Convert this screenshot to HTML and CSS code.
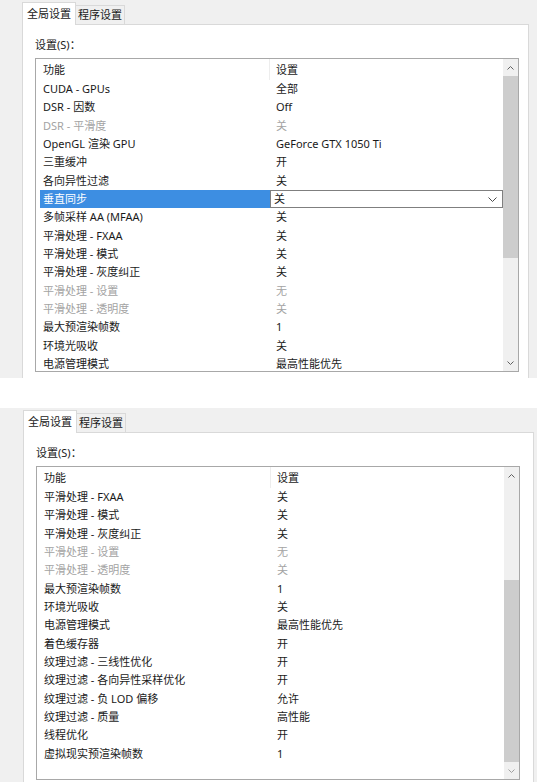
FILE: index.html
```html
<!DOCTYPE html>
<html lang="zh-CN">
  <head>
    <meta charset="UTF-8" />
    <meta name="viewport" content="width=device-width, initial-scale=1.0" />
    <title>管理 3D 设置</title>
    <link rel="stylesheet" href="styles.css">
  </head>
  <body>
    <div class="window">
      <div class="tabs">
        <div class="tab active">全局设置</div>
        <div class="tab">程序设置</div>
      </div>
      <div class="tab-page">
        <div class="field-label">设置(S)：</div>
        <div class="listview">
          <div class="list-body">
            <div class="row header"><span class="cell feature">功能</span><span class="cell value">设置</span></div>
            <div class="row"><span class="cell feature">CUDA - GPUs</span><span class="cell value">全部</span></div>
            <div class="row"><span class="cell feature">DSR - 因数</span><span class="cell value">Off</span></div>
            <div class="row disabled"><span class="cell feature">DSR - 平滑度</span><span class="cell value">关</span></div>
            <div class="row"><span class="cell feature">OpenGL 渲染 GPU</span><span class="cell value">GeForce GTX 1050 Ti</span></div>
            <div class="row"><span class="cell feature">三重缓冲</span><span class="cell value">开</span></div>
            <div class="row"><span class="cell feature">各向异性过滤</span><span class="cell value">关</span></div>
            <div class="row selected">
              <span class="cell feature">垂直同步</span>
              <span class="cell value combo">
                <span>关</span>
                <svg class="combo-arrow" width="9" height="5" viewBox="0 0 9 5"><polyline points="0.5,0.5 4.5,4.5 8.5,0.5" fill="none" stroke="#4a4a4a" stroke-width="1"/></svg>
              </span>
            </div>
            <div class="row"><span class="cell feature">多帧采样 AA (MFAA)</span><span class="cell value">关</span></div>
            <div class="row"><span class="cell feature">平滑处理 - FXAA</span><span class="cell value">关</span></div>
            <div class="row"><span class="cell feature">平滑处理 - 模式</span><span class="cell value">关</span></div>
            <div class="row"><span class="cell feature">平滑处理 - 灰度纠正</span><span class="cell value">关</span></div>
            <div class="row disabled"><span class="cell feature">平滑处理 - 设置</span><span class="cell value">无</span></div>
            <div class="row disabled"><span class="cell feature">平滑处理 - 透明度</span><span class="cell value">关</span></div>
            <div class="row"><span class="cell feature">最大预渲染帧数</span><span class="cell value">1</span></div>
            <div class="row"><span class="cell feature">环境光吸收</span><span class="cell value">关</span></div>
            <div class="row"><span class="cell feature">电源管理模式</span><span class="cell value">最高性能优先</span></div>
          </div>
          <div class="scrollbar">
            <div class="scroll-btn">
              <svg width="7" height="4" viewBox="0 0 7 4"><polyline points="0.5,3.5 3.5,0.5 6.5,3.5" fill="none" stroke="#606060" stroke-width="1"/></svg>
            </div>
            <div class="scroll-track"><div class="thumb"></div></div>
            <div class="scroll-btn">
              <svg width="7" height="4" viewBox="0 0 7 4"><polyline points="0.5,0.5 3.5,3.5 6.5,0.5" fill="none" stroke="#606060" stroke-width="1"/></svg>
            </div>
          </div>
        </div>
      </div>
    </div>

    <div class="window window-lower">
      <div class="tabs">
        <div class="tab active">全局设置</div>
        <div class="tab">程序设置</div>
      </div>
      <div class="tab-page">
        <div class="field-label">设置(S)：</div>
        <div class="listview">
          <div class="list-body">
            <div class="row header"><span class="cell feature">功能</span><span class="cell value">设置</span></div>
            <div class="row"><span class="cell feature">平滑处理 - FXAA</span><span class="cell value">关</span></div>
            <div class="row"><span class="cell feature">平滑处理 - 模式</span><span class="cell value">关</span></div>
            <div class="row"><span class="cell feature">平滑处理 - 灰度纠正</span><span class="cell value">关</span></div>
            <div class="row disabled"><span class="cell feature">平滑处理 - 设置</span><span class="cell value">无</span></div>
            <div class="row disabled"><span class="cell feature">平滑处理 - 透明度</span><span class="cell value">关</span></div>
            <div class="row"><span class="cell feature">最大预渲染帧数</span><span class="cell value">1</span></div>
            <div class="row"><span class="cell feature">环境光吸收</span><span class="cell value">关</span></div>
            <div class="row"><span class="cell feature">电源管理模式</span><span class="cell value">最高性能优先</span></div>
            <div class="row"><span class="cell feature">着色缓存器</span><span class="cell value">开</span></div>
            <div class="row"><span class="cell feature">纹理过滤 - 三线性优化</span><span class="cell value">开</span></div>
            <div class="row"><span class="cell feature">纹理过滤 - 各向异性采样优化</span><span class="cell value">开</span></div>
            <div class="row"><span class="cell feature">纹理过滤 - 负 LOD 偏移</span><span class="cell value">允许</span></div>
            <div class="row"><span class="cell feature">纹理过滤 - 质量</span><span class="cell value">高性能</span></div>
            <div class="row"><span class="cell feature">线程优化</span><span class="cell value">开</span></div>
            <div class="row"><span class="cell feature">虚拟现实预渲染帧数</span><span class="cell value">1</span></div>
          </div>
          <div class="scrollbar">
            <div class="scroll-btn">
              <svg width="7" height="4" viewBox="0 0 7 4"><polyline points="0.5,3.5 3.5,0.5 6.5,3.5" fill="none" stroke="#606060" stroke-width="1"/></svg>
            </div>
            <div class="scroll-track at-end"><div class="thumb"></div></div>
            <div class="scroll-btn">
              <svg width="7" height="4" viewBox="0 0 7 4"><polyline points="0.5,0.5 3.5,3.5 6.5,0.5" fill="none" stroke="#a0a0a0" stroke-width="1"/></svg>
            </div>
          </div>
        </div>
      </div>
    </div>
  </body>
</html>
```

FILE: styles.css
```css
* {
  box-sizing: border-box;
}

body {
  margin: 0;
  background: #fff;
  color: #1a1a1a;
  font-family: "Noto Sans", "Noto Sans CJK SC", sans-serif;
  font-size: 11px;
}

.window {
  height: 378px;
  background: #f0f0f0;
  padding: 0 8px 0 22px;
  display: flex;
  flex-direction: column;
  overflow: hidden;
}

.window-lower {
  height: 374px;
  margin-top: 30px;
  padding: 0 3px 0 23px;
}

/* tab strip */
.tabs {
  height: 24px;
  display: flex;
  align-items: flex-end;
}

.tab {
  height: 19px;
  line-height: 17px;
  padding: 0 2px;
  margin-left: -1px;
  border: 1px solid #d9d9d9;
  border-bottom: 0;
  background: #f0f0f0;
  white-space: nowrap;
}

.tab.active {
  height: 23px;
  line-height: 21px;
  padding: 0 4px;
  margin-left: 0;
  margin-bottom: -1px;
  background: #fff;
  position: relative;
  z-index: 1;
}

.tab-page {
  flex: 1;
  background: #fff;
  border: 1px solid #d9d9d9;
  border-bottom: 0;
  padding: 11px 9px 0 12px;
}

.window-lower .tab-page {
  padding-right: 13px;
}

.field-label {
  line-height: 18px;
  margin-bottom: 4px;
}

/* list view */
.listview {
  height: 314px;
  border: 1px solid #a8a8a8;
  background: #fff;
  display: flex;
}

.list-body {
  flex: 1;
  overflow: hidden;
}

.row {
  display: flex;
  height: 18.33px;
  line-height: 18.33px;
  white-space: nowrap;
}

.row.header {
  height: 21px;
  line-height: 21px;
}

.row.header .feature {
  border-right: 1px solid #ededed;
}

.cell.feature {
  width: 234px;
  padding-left: 7px;
}

.cell.value {
  flex: 1;
  padding-left: 6px;
}

.row.disabled {
  color: #a3a3a3;
}

.row.selected .feature {
  width: 230px;
  margin-left: 4px;
  padding-left: 3px;
  background: #3d8ee2;
  color: #fff;
}

.cell.combo {
  display: flex;
  align-items: center;
  justify-content: space-between;
  padding: 0 5px 0 3px;
  border: 1px solid #7f7f7f;
  line-height: 16px;
}

/* scrollbar */
.scrollbar {
  width: 15px;
  display: flex;
  flex-direction: column;
  background: #f0f0f0;
}

.scroll-btn {
  height: 17px;
  display: flex;
  align-items: center;
  justify-content: center;
}

.scroll-track {
  flex: 1;
  display: flex;
  flex-direction: column;
}

.scroll-track.at-end {
  justify-content: flex-end;
}

.thumb {
  height: 182px;
  background: #cdcdcd;
}
```
